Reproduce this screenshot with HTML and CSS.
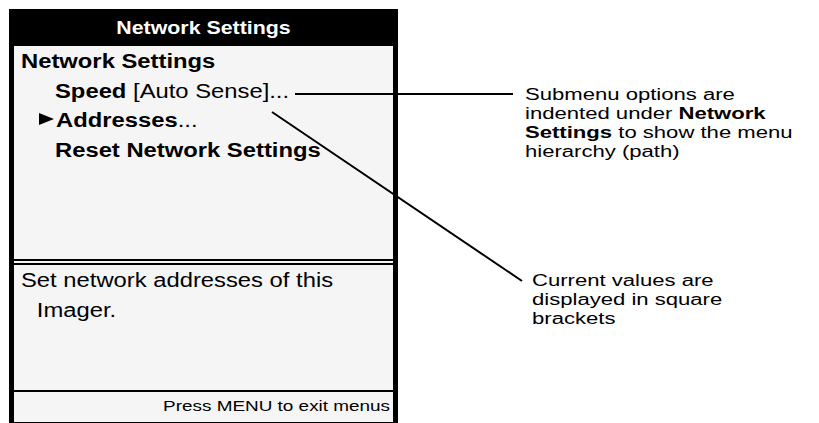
FILE: index.html
```html
<!DOCTYPE HTML>
<html lang="en">
<head>
<meta charset="UTF-8">
<title>Network Settings menu</title>
<link rel="stylesheet" href="styles.css">
</head>
<body>
<div class="figure">
    <div class="screen">
        <div class="screen-title"><span class="wide">Network Settings</span></div>
        <div class="menu">
            <div class="menu-path"><span class="wide">Network Settings</span></div>
            <div class="menu-item"><span class="wide"><b>Speed</b> [Auto Sense]...</span></div>
            <div class="menu-item selected"><svg class="pointer" width="15" height="12" viewBox="0 0 15 12"><polygon points="0,0 15,6 0,12" /></svg><span class="wide"><b>Addresses</b>...</span></div>
            <div class="menu-item"><span class="wide"><b>Reset Network Settings</b></span></div>
        </div>
        <div class="help">
            <p class="wide help-text">Set network addresses of this Imager.</p>
        </div>
        <div class="status"><span class="wide">Press MENU to exit menus</span></div>
    </div>

    <div class="notes">
        <p class="note note-path">Submenu options are<br>indented under <b>Network</b><br><b>Settings</b> to show the menu<br>hierarchy (path)</p>
        <p class="note note-values">Current values are<br>displayed in square<br>brackets</p>
    </div>

    <!-- callout leader lines -->
    <svg class="leaders" width="819" height="423" viewBox="0 0 819 423">
        <line x1="295" y1="94" x2="513" y2="94" />
        <line x1="272" y1="112" x2="522" y2="281" />
    </svg>
</div>
</body>
</html>
```
FILE: styles.css
```css
body {
    margin: 0;
    background-color: #fff;
    color: #000;
    font-family: "Liberation Sans", Arial, Helvetica, sans-serif;
    overflow: hidden;
}

.figure {
    position: relative;
    display: flex;
    height: 423px;
    padding: 9px 0 0 9px;
    box-sizing: border-box;
}

/* text in the original figure is printed a little wide */
.wide {
    display: inline-block;
    transform: scaleX(1.22);
    transform-origin: left center;
    white-space: nowrap;
}

/* the imager screen */
.screen {
    display: flex;
    flex-direction: column;
    width: 389px;
    height: 414px;
    box-sizing: border-box;
    background-color: #f5f5f5;
    border-left: 5px solid #000;
    border-right: 5px solid #000;
    border-bottom: 1px solid #000;
}

.screen-title {
    height: 37px;
    padding-top: 1px;
    box-sizing: border-box;
    background-color: #000;
    color: #fff;
    font-size: 17.5px;
    font-weight: bold;
    line-height: 36px;
    text-align: center;
}

.screen-title .wide {
    transform-origin: center center;
}

.menu {
    height: 219px;
    padding-top: 1px;
    box-sizing: border-box;
    border-bottom: 6px double #000;
    font-size: 19.5px;
    line-height: 29.5px;
}

.menu-path {
    padding-left: 7px;
    font-weight: bold;
}

.menu-item {
    padding-left: 41px;
}

.menu-item.selected {
    padding-left: 25px;
}

.pointer {
    margin-right: 2px;
    vertical-align: 2px;
}

.help {
    height: 127px;
    padding-left: 7px;
    box-sizing: border-box;
    border-bottom: 2px solid #000;
}

.help-text {
    display: block;
    width: 260px;
    margin: 0;
    padding-left: 13px;
    text-indent: -13px;
    white-space: normal;
    font-size: 19.5px;
    line-height: 30px;
}

.status {
    flex: 1;
    padding: 1px 3px 0 0;
    font-size: 15.5px;
    line-height: 26px;
    text-align: right;
}

.status .wide {
    transform-origin: right center;
}

/* callout texts on the right */
.notes {
    display: flex;
    flex-direction: column;
    padding-left: 127px;
}

.note {
    margin: 0;
    transform: scaleX(1.38);
    transform-origin: left center;
    white-space: nowrap;
    font-size: 16px;
    line-height: 19px;
}

.note-path {
    margin-top: 76px;
}

.note-values {
    margin-top: 110px;
    margin-left: 7px;
}

.leaders {
    position: absolute;
    top: 0;
    left: 0;
    pointer-events: none;
}

.leaders line {
    stroke: #000;
    stroke-width: 2;
}
```
